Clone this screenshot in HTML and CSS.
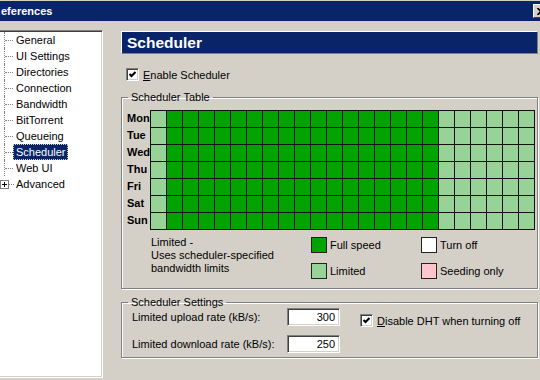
FILE: index.html
```html
<!DOCTYPE html>
<html lang="en">
<head>
    <meta charset="UTF-8">
    <title>Preferences</title>
<link rel="stylesheet" href="styles.css">
</head>
<body>
    <div class="titlebar">
        <span class="title">eferences</span>
        <span class="close"><svg width="8" height="7" viewBox="0 0 8 7"><path d="M0.5 0 L7.5 7 M7.5 0 L0.5 7" stroke="#000" stroke-width="1.6"/></svg></span>
    </div>
    <div class="main">
        <ul class="tree">
            <li><span class="branch"></span><span class="node">General</span></li>
            <li><span class="branch"></span><span class="node">UI Settings</span></li>
            <li><span class="branch"></span><span class="node">Directories</span></li>
            <li><span class="branch"></span><span class="node">Connection</span></li>
            <li><span class="branch"></span><span class="node">Bandwidth</span></li>
            <li><span class="branch"></span><span class="node">BitTorrent</span></li>
            <li><span class="branch"></span><span class="node">Queueing</span></li>
            <li class="selected"><span class="branch"></span><span class="node">Scheduler</span></li>
            <li><span class="branch"></span><span class="node">Web UI</span></li>
            <li><span class="plus"></span><span class="stub"></span><span class="node">Advanced</span></li>
        </ul>

        <div class="page">
            <div class="page-head">Scheduler</div>
            <label class="check enable">
                <span class="box"><svg width="7" height="7" viewBox="0 0 7 7"><polyline points="0.5,3 2.5,5 6.5,1" fill="none" stroke="#000" stroke-width="2"/></svg></span>
                <span><u>E</u>nable Scheduler</span>
            </label>

            <fieldset class="group">
                <legend>Scheduler Table</legend>
                <div class="sched">
                    <div class="days">
                        <span>Mon</span><span>Tue</span><span>Wed</span><span>Thu</span><span>Fri</span><span>Sat</span><span>Sun</span>
                    </div>
                    <div class="grid" id="grid"></div>
                </div>
                <div class="key">
                    <p class="key-note">Limited -<br>Uses scheduler-specified<br>bandwidth limits</p>
                    <div class="key-items">
                        <span class="key-item"><i class="swatch full"></i>Full speed</span>
                        <span class="key-item"><i class="swatch off"></i>Turn off</span>
                        <span class="key-item"><i class="swatch limited"></i>Limited</span>
                        <span class="key-item"><i class="swatch seed"></i>Seeding only</span>
                    </div>
                </div>
            </fieldset>

            <fieldset class="group settings-group">
                <legend>Scheduler Settings</legend>
                <div class="settings">
                    <div class="rates">
                        <label class="rate"><span>Limited upload rate (kB/s):</span><input type="text" value="300"></label>
                        <label class="rate"><span>Limited download rate (kB/s):</span><input type="text" value="250"></label>
                    </div>
                    <label class="check dht">
                        <span class="box"><svg width="7" height="7" viewBox="0 0 7 7"><polyline points="0.5,3 2.5,5 6.5,1" fill="none" stroke="#000" stroke-width="2"/></svg></span>
                        <span><u>D</u>isable DHT when turning off</span>
                    </label>
                </div>
            </fieldset>
        </div>
    </div>

    <script>
        // hours 0 and 18-23 run limited, the rest full speed
        const grid = document.querySelector("#grid");
        for (let d = 0; d < 7; d++) {
            for (let h = 0; h < 24; h++) {
                const cell = document.createElement("div");
                cell.className = (h === 0 || h >= 18) ? "cell limited" : "cell full";
                grid.appendChild(cell);
            }
        }
    </script>
</body>
</html>
```

FILE: styles.css
```css
body {
    margin: 0;
    width: 540px;
    height: 380px;
    overflow: hidden;
    font-family: "Liberation Sans", Arial, sans-serif;
    font-size: 11px;
    background-color: #d4d0c8;
    color: #000;
}

.titlebar {
    margin-top: 1px;
    height: 20px;
    display: flex;
    align-items: center;
    background-color: #0a246a;
    color: #fff;
    font-weight: bold;
}
.title {
    padding-left: 1px;
}
.close {
    margin-left: auto;
    margin-right: -9px;
    width: 16px;
    height: 14px;
    box-sizing: border-box;
    display: flex;
    align-items: center;
    justify-content: center;
    background-color: #d4d0c8;
    border: 1px solid;
    border-color: #fff #404040 #404040 #fff;
}

.main {
    display: flex;
    gap: 18px;
    padding-top: 9px;
}

/* tree */
.tree {
    margin: 0 0 0 -2px;
    padding: 1px 0 0 1px;
    list-style: none;
    width: 105px;
    height: 348px;
    box-sizing: border-box;
    background-color: #fff;
    border: 1px solid;
    border-color: #808080 #fff #fff #808080;
    box-shadow: inset 1px 1px #404040, inset -1px -1px #d4d0c8;
}
.tree li {
    display: flex;
    align-items: center;
    height: 16px;
}
.branch {
    width: 9px;
    height: 16px;
    margin-left: 4px;
    border-left: 1px dotted #808080;
    display: flex;
    align-items: center;
}
.branch::after {
    content: "";
    width: 8px;
    border-top: 1px dotted #808080;
}
.plus {
    width: 7px;
    height: 7px;
    border: 1px solid #808080;
    background:
        linear-gradient(#000, #000) center / 5px 1px no-repeat,
        linear-gradient(#000, #000) center / 1px 5px no-repeat,
        #fff;
}
.stub {
    width: 5px;
    border-top: 1px dotted #808080;
}
.node {
    padding: 0 2px;
    line-height: 16px;
}
.selected .node {
    margin-left: -1px;
    padding-left: 3px;
    background-color: #0a246a;
    color: #fff;
    outline: 1px dotted #d4d0c8;
    outline-offset: -1px;
}

/* page */
.page {
    width: 417px;
    padding-top: 1px;
}
.page-head {
    height: 23px;
    box-sizing: border-box;
    padding-left: 5px;
    background-color: #0a246a;
    border: 1px solid;
    border-color: #fff #808080 #808080 #fff;
    color: #fff;
    font-size: 15.5px;
    font-weight: bold;
    line-height: 21px;
}

.check {
    display: flex;
    align-items: center;
    gap: 4px;
    height: 13px;
}
.box {
    width: 13px;
    height: 13px;
    box-sizing: border-box;
    display: flex;
    align-items: center;
    justify-content: center;
    background-color: #fff;
    border: 1px solid;
    border-color: #808080 #fff #fff #808080;
    box-shadow: inset 1px 1px #404040, inset -1px -1px #d4d0c8;
}
.enable {
    margin: 14px 0 0 5px;
}

.group {
    margin: 10px 0 0;
    padding: 7px 4px 9px 5px;
    min-width: 0;
    border: 1px solid #808080;
    box-shadow: inset 1px 1px #fff, 1px 1px #fff;
}
.group legend {
    margin-left: 1px;
    padding: 0 3px;
    line-height: 12px;
}

.sched {
    display: flex;
}
.days {
    width: 23px;
    padding-top: 1px;
    font-weight: bold;
}
.days span {
    display: block;
    height: 17px;
    line-height: 14px;
}
.grid {
    display: grid;
    grid-template-columns: repeat(24, 15px);
    grid-auto-rows: 16px;
    gap: 1px;
    padding: 1px;
    background-color: #111;
}
.cell.full {
    background-color: #00a300;
}
.cell.limited {
    background-color: #97d397;
}

.key {
    display: flex;
    margin-top: 6px;
}
.key-note {
    margin: 0 0 0 24px;
    width: 160px;
    line-height: 13px;
}
.key-items {
    display: grid;
    grid-template-columns: 110px 110px;
    row-gap: 10px;
    padding-top: 1px;
    align-content: start;
}
.key-item {
    display: flex;
    align-items: center;
    gap: 3px;
    height: 16px;
}
.swatch {
    width: 16px;
    height: 16px;
    box-sizing: border-box;
    border: 1px solid #222;
}
.swatch.full {
    background-color: #00a300;
}
.swatch.limited {
    background-color: #97d397;
}
.swatch.off {
    background-color: #fff;
}
.swatch.seed {
    background-color: #ffc4cc;
}

.settings-group {
    margin-top: 7px;
    padding: 0 4px 4px 10px;
}
.settings-group legend {
    margin-left: -4px;
}
.settings {
    display: flex;
}
.rates {
    display: flex;
    flex-direction: column;
    gap: 9px;
}
.rate {
    display: flex;
    align-items: center;
}
.rate span {
    width: 155px;
}
.rate input {
    width: 53px;
    height: 18px;
    box-sizing: border-box;
    padding: 0 4px;
    font-family: inherit;
    font-size: 11px;
    text-align: right;
    background-color: #fff;
    border: 1px solid;
    border-color: #808080 #fff #fff #808080;
    box-shadow: inset 1px 1px #404040, inset -1px -1px #d4d0c8;
}
.dht {
    margin: 6px 0 0 20px;
}
```
